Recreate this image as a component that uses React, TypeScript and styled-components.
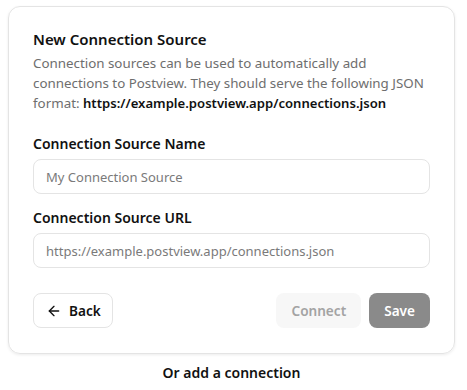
import React from "react";
import styled, { createGlobalStyle } from "styled-components";

const Global = createGlobalStyle`
  html, body { margin: 0; padding: 0; background: #ffffff; }
  body { font-family: "Noto Sans", "Open Sans", sans-serif; color: #111111; }
  * { box-sizing: border-box; }
`;

const Page = styled.div`
  padding: 6px 12px 0 8px;
  display: flex;
  flex-direction: column;
`;

const Card = styled.div`
  border: 1px solid #e4e4e4;
  border-radius: 12px;
  box-shadow: 0 1px 3px rgba(0, 0, 0, 0.08);
  padding: 21px 24px 25px 24px;
  display: flex;
  flex-direction: column;
`;

const Title = styled.h2`
  margin: 0 0 3px 0;
  font-size: 15px;
  font-weight: 600;
  line-height: 22px;
  color: #111;
`;

const Desc = styled.p`
  margin: 0;
  font-size: 13.35px;
  line-height: 20px;
  color: #6e6e6e;
`;

const Strong = styled.span`
  font-size: 13.1px;
  font-weight: 600;
  color: #111;
`;

const Field = styled.div<{ $mt: number }>`
  display: flex;
  flex-direction: column;
  gap: 5px;
  margin-top: ${(p) => p.$mt}px;
`;

const Label = styled.label`
  font-size: 14px;
  font-weight: 600;
  line-height: 20px;
  color: #111;
`;

const Input = styled.input`
  height: 35px;
  border: 1px solid #e4e4e4;
  border-radius: 8px;
  padding: 0 12px;
  font-family: inherit;
  font-size: 13px;
  color: #111;
  background: #fff;
  outline: none;
  &::placeholder { color: #7a7a7a; }
`;

const Actions = styled.div`
  display: flex;
  align-items: center;
  gap: 8px;
  margin-top: 25px;
`;

const Spacer = styled.div`
  flex: 1;
`;

const Button = styled.button<{ $variant: "outline" | "ghost" | "solid" }>`
  height: 35px;
  border-radius: 8px;
  padding: 0 ${(p) => (p.$variant === "outline" ? "11px 0 12px" : "14px")};
  font-family: inherit;
  font-size: 13.6px;
  font-weight: 600;
  display: inline-flex;
  align-items: center;
  gap: 7px;
  border: 1px solid
    ${(p) => (p.$variant === "outline" ? "#e4e4e4" : "transparent")};
  background: ${(p) =>
    p.$variant === "solid" ? "#8a8a8a" : p.$variant === "ghost" ? "#f7f7f7" : "#fff"};
  color: ${(p) =>
    p.$variant === "solid" ? "#fff" : p.$variant === "ghost" ? "#a3a3a3" : "#111"};
  cursor: pointer;
`;

const Footer = styled.div`
  text-align: center;
  font-size: 14px;
  font-weight: 600;
  line-height: 20px;
  margin-top: 9px;
`;

export default function App() {
  return (
    <>
      <Global />
      <Page>
        <Card>
          <Title>New Connection Source</Title>
          <Desc>
            Connection sources can be used to automatically add connections to
            Postview. They should serve the following JSON format:{" "}
            <Strong>https://example.postview.app/connections.json</Strong>
          </Desc>
          <Field $mt={21}>
            <Label>Connection Source Name</Label>
            <Input placeholder="My Connection Source" />
          </Field>
          <Field $mt={14}>
            <Label>Connection Source URL</Label>
            <Input placeholder="https://example.postview.app/connections.json" />
          </Field>
          <Actions>
            <Button $variant="outline">
              <svg width="16" height="16" viewBox="0 0 24 24" fill="none" stroke="currentColor" strokeWidth="2" strokeLinecap="round" strokeLinejoin="round">
                <path d="M19 12H5" />
                <path d="M12 19l-7-7 7-7" />
              </svg>
              Back
            </Button>
            <Spacer />
            <Button $variant="ghost">Connect</Button>
            <Button $variant="solid">Save</Button>
          </Actions>
        </Card>
        <Footer>Or add a connection</Footer>
      </Page>
    </>
  );
}
